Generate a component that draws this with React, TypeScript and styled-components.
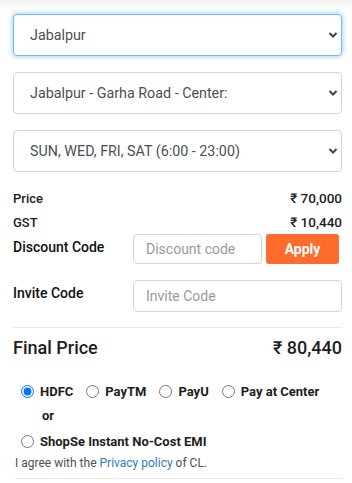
import styled, { createGlobalStyle } from "styled-components";

const GlobalStyle = createGlobalStyle`
  * { box-sizing: border-box; }
  body {
    margin: 0;
    background: #fff;
    font-family: Roboto, "Liberation Sans", Arial, sans-serif;
    color: #212529;
  }
`;

const Page = styled.div`
  position: relative;
  width: 352px;
  padding: 14px 10px 0 13px;
  background: linear-gradient(to bottom, rgba(0, 0, 0, 0.06), rgba(0, 0, 0, 0) 10px);
`;

const SelectWrap = styled.div<{ $mb: number }>`
  position: relative;
  margin-bottom: ${(p) => p.$mb}px;
`;

const Select = styled.select<{ $focused?: boolean }>`
  appearance: none;
  width: 100%;
  height: 42px;
  padding: 0 30px 0 16px;
  font-family: inherit;
  font-size: 14.3px;
  color: #495057;
  background: #fff;
  border: 1px solid ${(p) => (p.$focused ? "#7ab8f0" : "#d6d3d3")};
  border-radius: 4px;
  box-shadow: ${(p) => (p.$focused ? "0 0 5px 1px rgba(102, 175, 233, 0.55)" : "none")};
  outline: none;
`;

const Chevron = styled.svg`
  position: absolute;
  right: 4px;
  top: 50%;
  margin-top: -4px;
  width: 10px;
  height: 8px;
  pointer-events: none;
`;

const PriceRow = styled.div`
  display: flex;
  justify-content: space-between;
  align-items: center;
  height: 24px;
  font-size: 13px;
  font-weight: 500;
  color: #1d1d1d;
`;

const Amount = styled.span`
  font-size: 13.5px;
`;

const FieldRow = styled.div<{ $gap?: number }>`
  display: flex;
  align-items: center;
  margin-top: ${(p) => p.$gap ?? 0}px;
`;

const FieldLabel = styled.label`
  width: 120px;
  font-size: 14px;
  font-weight: 500;
  color: #111;
  align-self: flex-start;
  padding-top: 5px;
`;

const TextInput = styled.input<{ $h: number }>`
  flex: 1;
  min-width: 0;
  height: ${(p) => p.$h}px;
  padding: 0 12px;
  font-family: inherit;
  font-size: 14px;
  color: #495057;
  border: 1px solid #d6d3d3;
  border-radius: 4px;
  outline: none;
  &::placeholder { color: #9a9a9a; }
`;

const ApplyButton = styled.button`
  width: 73px;
  height: 30px;
  margin-left: 4px;
  margin-right: 3px;
  border: none;
  border-radius: 3px;
  background: #ff6a2d;
  color: #fff;
  font-family: inherit;
  font-size: 14px;
  font-weight: 700;
`;

const Spacer = styled.div<{ $h: number }>`
  height: ${(p) => p.$h}px;
`;

const Divider = styled.hr<{ $inset?: number }>`
  border: none;
  border-top: 1px solid #e9e9e9;
  margin: 0 0 0 ${(p) => p.$inset ?? 0}px;
`;

const FinalRow = styled.div`
  display: flex;
  justify-content: space-between;
  align-items: center;
  height: 38px;
  font-size: 18px;
  font-weight: 500;
  color: #1d1d1d;
`;

const PayBox = styled.div`
  padding: 18px 0 0 8px;
`;

const RadioLine = styled.div`
  display: flex;
  align-items: center;
  flex-wrap: wrap;
  gap: 13px;
`;

const RadioLabel = styled.label`
  display: inline-flex;
  align-items: center;
  font-size: 13px;
  font-weight: 700;
  color: #1d1d1d;
  input { margin: 0 6px 0 0; width: 13px; height: 13px; }
`;

const OrText = styled.div`
  font-size: 13px;
  font-weight: 700;
  color: #1d1d1d;
  padding: 9px 0 11px 21px;
`;

const Agree = styled.p`
  margin: 7px 0 8px 2px;
  font-size: 12px;
  color: #505050;
  a { color: #2f7bbf; text-decoration: none; }
`;

const ChevronIcon = () => (
  <Chevron viewBox="0 0 10 8">
    <path d="M1.5 2 L5 5.5 L8.5 2" fill="none" stroke="#444" strokeWidth="2" />
  </Chevron>
);

export default function App() {
  return (
    <>
      <GlobalStyle />
      <Page>
        <SelectWrap $mb={16}>
          <Select $focused defaultValue="jbp">
            <option value="jbp">Jabalpur</option>
          </Select>
          <ChevronIcon />
        </SelectWrap>
        <SelectWrap $mb={16}>
          <Select defaultValue="garha">
            <option value="garha">Jabalpur - Garha Road - Center:</option>
          </Select>
          <ChevronIcon />
        </SelectWrap>
        <SelectWrap $mb={14}>
          <Select defaultValue="days">
            <option value="days">SUN, WED, FRI, SAT (6:00 - 23:00)</option>
          </Select>
          <ChevronIcon />
        </SelectWrap>

        <PriceRow>
          <span>Price</span>
          <Amount>₹ 70,000</Amount>
        </PriceRow>
        <PriceRow>
          <span>GST</span>
          <Amount>₹ 10,440</Amount>
        </PriceRow>

        <FieldRow $gap={0}>
          <FieldLabel>Discount Code</FieldLabel>
          <TextInput $h={30} placeholder="Discount code" />
          <ApplyButton>Apply</ApplyButton>
        </FieldRow>
        <FieldRow $gap={16}>
          <FieldLabel>Invite Code</FieldLabel>
          <TextInput $h={32} placeholder="Invite Code" />
        </FieldRow>

        <Spacer $h={15} />
        <Divider />
        <FinalRow>
          <span>Final Price</span>
          <span>₹ 80,440</span>
        </FinalRow>

        <PayBox>
          <RadioLine>
            <RadioLabel><input type="radio" name="pay" defaultChecked />HDFC</RadioLabel>
            <RadioLabel><input type="radio" name="pay" />PayTM</RadioLabel>
            <RadioLabel><input type="radio" name="pay" />PayU</RadioLabel>
            <RadioLabel><input type="radio" name="pay" />Pay at Center</RadioLabel>
          </RadioLine>
          <OrText>or</OrText>
          <RadioLine>
            <RadioLabel><input type="radio" name="pay" />ShopSe Instant No-Cost EMI</RadioLabel>
          </RadioLine>
        </PayBox>
        <Agree>
          I agree with the <a href="#">Privacy policy</a> of CL.
        </Agree>
        <Divider $inset={2} />
      </Page>
    </>
  );
}
